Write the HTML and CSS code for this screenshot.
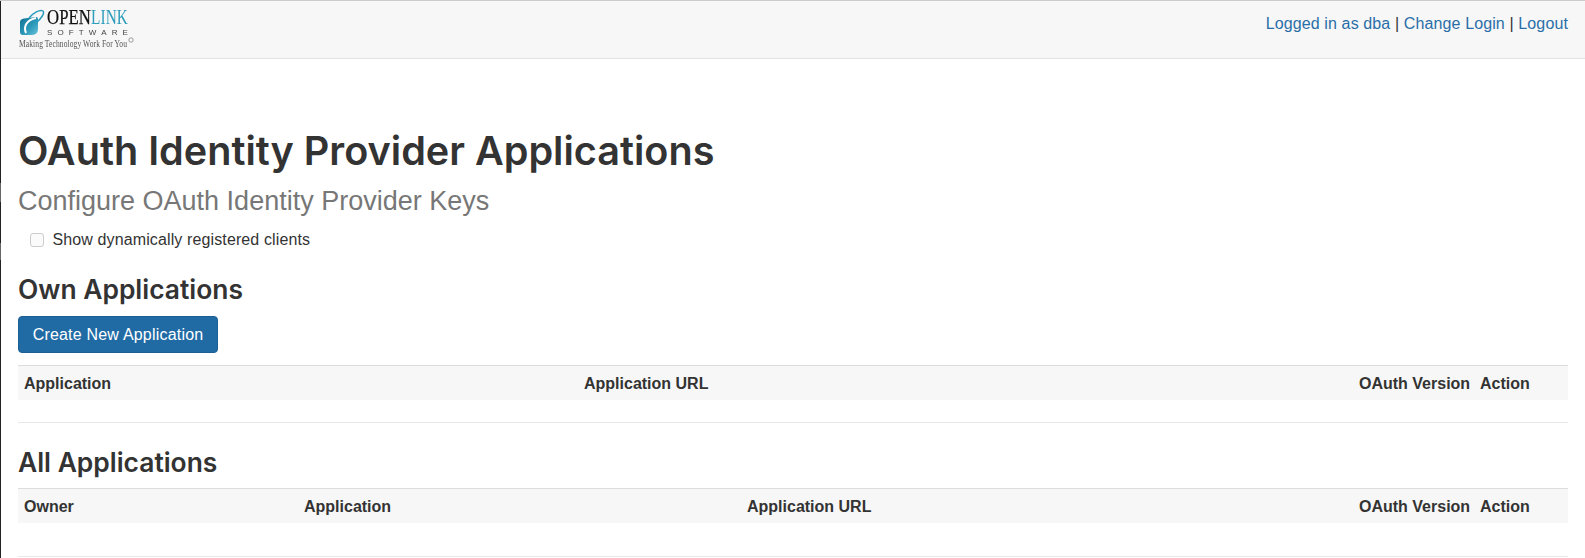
FILE: index.html
```html
<!DOCTYPE html>
<html lang="en">
<head>
<meta charset="utf-8">
<title>OAuth Identity Provider Applications</title>
<link rel="stylesheet" href="styles.css">
</head>
<body>
<div class="edge"></div>
<header class="navbar">
  <svg class="logo" width="125" height="44" viewBox="0 0 125 44" aria-hidden="true">
    <defs>
      <linearGradient id="lg" x1="0" y1="0" x2="1" y2="1">
        <stop offset="0" stop-color="#0f6f92"/>
        <stop offset=".6" stop-color="#2f9cbc"/>
        <stop offset="1" stop-color="#6cc3da"/>
      </linearGradient>
    </defs>
    <path d="M2 13 Q2 10 6 9.5 L18 8 Q20 8 20 10 L20 20 Q20 26 13 26 L5 26 Q2 26 2 23 Z" fill="url(#lg)"/>
    <path d="M8 24 C5 17 9 11 18 9" fill="none" stroke="#fff" stroke-width="2"/>
    <path d="M11 9 C15 4 22 0 25 2 C27 4 23 10 18 14" fill="none" stroke="#2b9cbc" stroke-width="1.5"/>
    <text x="29" y="15" class="logo-open" textLength="44" lengthAdjust="spacingAndGlyphs">OPEN</text>
    <text x="73" y="15" class="logo-link" textLength="37" lengthAdjust="spacingAndGlyphs">LINK</text>
    <text x="29" y="26" class="logo-soft" textLength="81">SOFTWARE</text>
    <text x="1" y="38" class="logo-tag" textLength="108" lengthAdjust="spacingAndGlyphs">Making Technology Work For You</text>
    <circle cx="113" cy="31" r="2.2" fill="none" stroke="#777" stroke-width=".7"/>
  </svg>
  <nav class="userlinks">
    <a href="#">Logged in as dba</a> | <a href="#">Change Login</a> | <a href="#">Logout</a>
  </nav>
</header>
<main class="content">
  <h1>OAuth Identity Provider Applications</h1>
  <p class="lead">Configure OAuth Identity Provider Keys</p>
  <label class="check"><input type="checkbox"> Show dynamically registered clients</label>
  <h3>Own Applications</h3>
  <button class="btn" type="button">Create New Application</button>
  <table class="own">
    <thead><tr><th class="c-app">Application</th><th>Application URL</th><th class="c-ver">OAuth Version</th><th class="c-act">Action</th></tr></thead>
    <tbody><tr><td colspan="4"></td></tr></tbody>
  </table>
  <h3 class="second">All Applications</h3>
  <table class="all">
    <thead><tr><th class="c-owner">Owner</th><th class="c-app2">Application</th><th>Application URL</th><th class="c-ver">OAuth Version</th><th class="c-act">Action</th></tr></thead>
    <tbody><tr><td colspan="5"></td></tr></tbody>
  </table>
</main>
</body>
</html>
```
FILE: styles.css
```css
* { box-sizing: border-box; }
html, body { margin: 0; height: 558px; overflow: hidden; background: #fff; }
body { font-family: "Liberation Sans", Arial, sans-serif; font-size: 16px; line-height: 24px; letter-spacing: .12px; color: #333; position: relative; }
.edge { position: absolute; z-index: 1; left: 0; top: 1px; bottom: 0; width: 1px; background: linear-gradient(to bottom, #222 0, #222 182px, #666 182px, #666 201px, #222 201px, #222 242px, #666 242px, #666 259px, #222 259px); }
.navbar { height: 59px; background: #f7f7f7; border-top: 1px solid #ccc; border-bottom: 1px solid #e3e3e3; position: relative; display: flex; justify-content: flex-end; padding: 11px 17px 0 0; }
.logo { position: absolute; left: 18px; top: 8px; filter: blur(.4px); }
.logo-open { font-family: "Liberation Serif", serif; font-size: 20px; fill: #111; stroke: #111; stroke-width: .25px; }
.logo-link { font-family: "Liberation Serif", serif; font-size: 20px; fill: #2b9cbc; }
.logo-soft { font-family: "Liberation Sans", sans-serif; font-size: 8px; fill: #444; }
.logo-tag { font-family: "Liberation Serif", serif; font-size: 10px; fill: #555; }
.userlinks a { color: #2a6ea8; text-decoration: none; }
.content { padding: 0 17px 0 18px; }
h1 { font-family: Inter, "Liberation Sans", sans-serif; font-size: 39.6px; line-height: 44px; font-weight: 600; letter-spacing: 0; margin: 70px 0 0; color: #333; }
.lead { font-size: 27px; line-height: 32px; letter-spacing: 0; color: #777; margin: 12px 0 0; }
.check { display: flex; align-items: center; gap: 8.5px; margin: 11px 0 0 12px; }
.check input { appearance: none; margin: 0; width: 14px; height: 14px; background: #fbfbfb; border: 1px solid #ccc; border-radius: 3px; }
h3 { font-family: Inter, "Liberation Sans", sans-serif; font-size: 26.4px; line-height: 32px; font-weight: 600; letter-spacing: 0; margin: 21px 0 0; color: #333; }
.btn { display: block; margin: 11px 0 0; height: 37px; width: 200px; padding: 0; background: #216ba5; color: #fff; border: 1px solid #1c5f94; border-radius: 4px; font: 16px/24px "Liberation Sans", Arial, sans-serif; letter-spacing: .2px; }
table { width: 100%; border-collapse: collapse; table-layout: fixed; letter-spacing: 0; margin-top: 12px; }
th { text-align: left; font-weight: 700; white-space: nowrap; background: #f7f7f7; border-top: 1px solid #ddd; padding: 2px 6px 0; height: 34px; line-height: 20px; }
td { height: 23px; border-bottom: 1px solid #e8e8e8; padding: 0; }
.all td { height: 34px; }
.c-app { width: 560px; }
.c-ver { width: 121px; }
.c-act { width: 94px; }
.c-owner { width: 280px; }
.c-app2 { width: 443px; }
.second { margin-top: 23px; }
.all { margin-top: 10px; }
```
